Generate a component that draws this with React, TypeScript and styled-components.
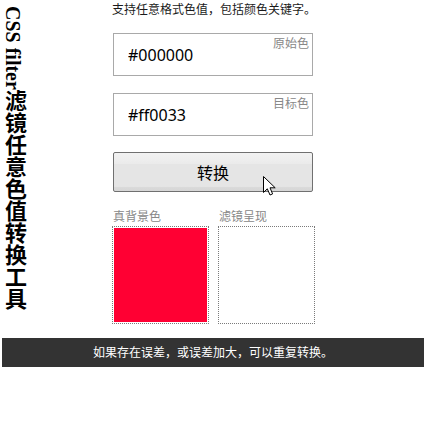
import React from "react";
import styled, { createGlobalStyle } from "styled-components";

const GlobalStyle = createGlobalStyle`
  body {
    margin: 0;
    background: #fff;
    font-family: "Noto Sans", "Noto Sans CJK SC", sans-serif;
  }
`;

const Page = styled.div`
  padding: 0 2px;
`;

const Top = styled.div`
  display: grid;
  grid-template-columns: 1fr 200px 1fr;
  align-items: start;
`;

const Title = styled.h1`
  margin: 0;
  padding-top: 6px;
  width: 22px;
  writing-mode: vertical-rl;
  font-family: "Liberation Serif", "Noto Sans CJK SC", serif;
  font-size: 22px;
  line-height: 22px;
  font-weight: bold;
  color: #000;
  justify-self: start;
`;

const TitleLatin = styled.span`
  font-size: 20px;
`;

const Main = styled.main`
  display: flex;
  flex-direction: column;
`;

const Hint = styled.p`
  margin: 0 0 13px -1px;
  font-size: 12px;
  line-height: 20px;
  color: #1a1a1a;
  white-space: nowrap;
`;

const FieldBox = styled.label<{ $gap: number }>`
  position: relative;
  display: flex;
  align-items: center;
  height: 43px;
  box-sizing: border-box;
  border: 1px solid #a9a9a9;
  margin-bottom: ${(p) => p.$gap}px;
`;

const FieldInput = styled.input`
  border: none;
  outline: none;
  background: transparent;
  width: 100%;
  padding: 0 0 0 14px;
  font-family: "Noto Sans", sans-serif;
  font-size: 16px;
  color: #000;
`;

const FieldTag = styled.span`
  position: absolute;
  top: 3px;
  right: 3px;
  font-size: 12px;
  line-height: 14px;
  color: #888;
`;

const ButtonWrap = styled.div`
  position: relative;
`;

const ConvertButton = styled.button`
  width: 200px;
  height: 40px;
  border: 1px solid #707070;
  border-radius: 2px;
  background: linear-gradient(
    #f2f2f2 0%,
    #ebebeb 28%,
    #e5e5e5 30%,
    #e5e5e5 88%,
    #dadada 90%,
    #d6d6d6 100%
  );
  font-family: "Noto Sans CJK SC", sans-serif;
  font-size: 16px;
  color: #000;
  padding: 0;
`;

const Cursor = styled.svg`
  position: absolute;
  left: 150px;
  top: 24px;
  width: 13px;
  height: 20px;
`;

const Preview = styled.div`
  display: grid;
  grid-template-columns: 97px 97px;
  column-gap: 9px;
  margin: 17px 0 0 -1px;
`;

const PreviewCol = styled.div`
  display: flex;
  flex-direction: column;
`;

const PreviewLabel = styled.span`
  font-size: 12px;
  line-height: 16px;
  color: #888;
  padding-left: 1px;
  margin-bottom: 1px;
`;

const Swatch = styled.div`
  height: 98px;
  box-sizing: border-box;
  border: 1px dotted #7a7a7a;
  padding: 1px;
`;

const Fill = styled.div<{ $color: string }>`
  height: 100%;
  background: ${(p) => p.$color};
`;

const Footer = styled.footer`
  margin-top: 14px;
  height: 29px;
  background: #333;
  color: #fff;
  font-size: 12px;
  line-height: 29px;
  text-align: center;
`;

const Field: React.FC<{ tag: string; value: string; gap: number }> = ({ tag, value, gap }) => (
  <FieldBox $gap={gap}>
    <FieldInput defaultValue={value} />
    <FieldTag>{tag}</FieldTag>
  </FieldBox>
);

const App: React.FC = () => {
  return (
    <Page>
      <GlobalStyle />
      <Top>
        <Title>
          <TitleLatin>CSS filter</TitleLatin>滤镜任意色值转换工具
        </Title>
        <Main>
          <Hint>支持任意格式色值，包括颜色关键字。</Hint>
          <Field tag="原始色" value="#000000" gap={17} />
          <Field tag="目标色" value="#ff0033" gap={16} />
          <ButtonWrap>
            <ConvertButton>转换</ConvertButton>
            <Cursor viewBox="0 0 13 20">
              <path
                d="M0.5 0.5 L0.5 16.5 L4.3 12.8 L7 19 L9.6 17.9 L7 11.8 L12.2 11.8 Z"
                fill="#fff"
                stroke="#000"
                strokeWidth="1"
                strokeLinejoin="miter"
              />
            </Cursor>
          </ButtonWrap>
          <Preview>
            <PreviewCol>
              <PreviewLabel>真背景色</PreviewLabel>
              <Swatch>
                <Fill $color="#ff0033" />
              </Swatch>
            </PreviewCol>
            <PreviewCol>
              <PreviewLabel>滤镜呈现</PreviewLabel>
              <Swatch>
                <Fill $color="#fff" />
              </Swatch>
            </PreviewCol>
          </Preview>
        </Main>
      </Top>
      <Footer>如果存在误差，或误差加大，可以重复转换。</Footer>
    </Page>
  );
};

export default App;
